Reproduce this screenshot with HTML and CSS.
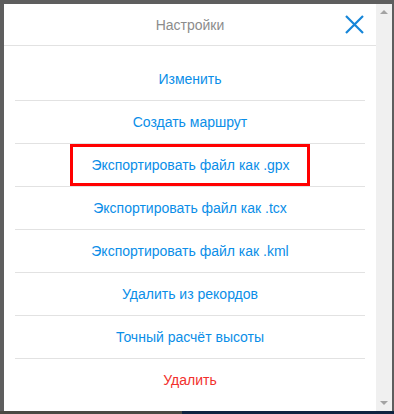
FILE: index.html
```html
<!DOCTYPE html>
<html lang="ru">
<head>
    <meta charset="UTF-8">
    <meta name="viewport" content="width=device-width, initial-scale=1.0">
    <title>Настройки</title>
    <link rel="stylesheet" href="styles.css">
</head>
<body>
    <div class="backdrop">
        <div class="modal">
            <div class="panel">
                <!-- Header -->
                <div class="header">
                    <span class="title">Настройки</span>
                    <button class="close" aria-label="Закрыть">
                        <svg width="19" height="19" viewBox="0 0 19 19">
                            <path d="M1 1 L18 18 M18 1 L1 18" stroke="#1585d8" stroke-width="2.2" fill="none"/>
                        </svg>
                    </button>
                </div>

                <!-- Menu -->
                <ul class="menu">
                    <li class="item first"><a href="#">Изменить</a></li>
                    <li class="item"><a href="#">Создать маршрут</a></li>
                    <li class="item"><a href="#" class="marked">Экспортировать файл как .gpx</a></li>
                    <li class="item"><a href="#">Экспортировать файл как .tcx</a></li>
                    <li class="item"><a href="#">Экспортировать файл как .kml</a></li>
                    <li class="item"><a href="#">Удалить из рекордов</a></li>
                    <li class="item"><a href="#">Точный расчёт высоты</a></li>
                    <li class="item"><a href="#" class="danger">Удалить</a></li>
                </ul>
            </div>

            <!-- Scrollbar -->
            <div class="scrollbar">
                <span class="arrow up"></span>
                <span class="arrow down"></span>
            </div>
        </div>
    </div>
</body>
</html>
```

FILE: styles.css
```css
html, body {
    margin: 0;
    padding: 0;
}
body {
    font-family: 'Liberation Sans', Arial, sans-serif;
    background: #5e5e5e;
    width: 394px;
    height: 414px;
    overflow: hidden;
}
.backdrop {
    padding: 4px 2px 0 4px;
    height: 414px;
    box-sizing: border-box;
    background: linear-gradient(to right, #4a4942 0, #4a4942 182px, #0f2340 182px, #0f2340 100%) bottom / 100% 3px no-repeat, #5e5e5e;
}
.modal {
    display: flex;
    width: 388px;
    height: 407px;
}
.panel {
    width: 372px;
    background: #fff;
}
.header {
    position: relative;
    height: 41px;
    border-bottom: 1px solid #e2e2e2;
    display: flex;
    align-items: center;
    justify-content: center;
}
.title {
    color: #8c8c8c;
    font-size: 14px;
    margin-top: 0;
}
.close {
    position: absolute;
    right: 12px;
    top: 11px;
    width: 20px;
    height: 20px;
    padding: 0;
    border: none;
    background: none;
    cursor: pointer;
}
.menu {
    list-style: none;
    margin: 0;
    padding: 11px 11px 0;
}
.item {
    height: 42px;
    border-top: 1px solid #e2e2e2;
    display: flex;
    justify-content: center;
    align-items: center;
}
.item.first {
    border-top-color: transparent;
}
.item a {
    color: #0a8ee8;
    font-size: 14px;
    text-decoration: none;
}
.item a.danger {
    color: #f2302c;
}
.item a.marked {
    align-self: stretch;
    display: flex;
    align-items: center;
    box-sizing: border-box;
    border: 3px solid #f00;
    padding: 0 17px 0 18px;
}
.scrollbar {
    position: relative;
    width: 16px;
    background: #f0f0f0;
}
.arrow {
    position: absolute;
    left: 4px;
    width: 0;
    height: 0;
    border-left: 4px solid transparent;
    border-right: 4px solid transparent;
}
.arrow.up {
    top: 6px;
    border-bottom: 4px solid #a3a3a3;
}
.arrow.down {
    bottom: 6px;
    border-top: 4px solid #a3a3a3;
}
```
